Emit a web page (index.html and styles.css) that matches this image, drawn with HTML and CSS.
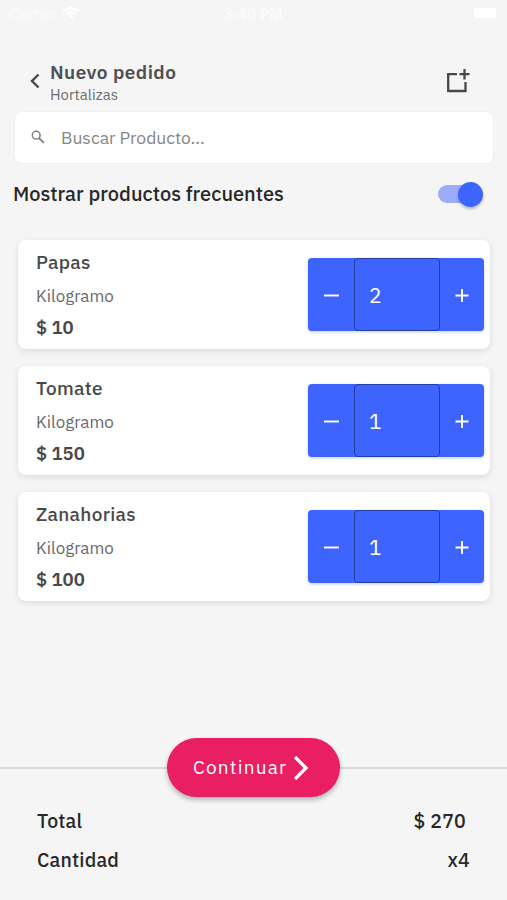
FILE: index.html
```html
<!DOCTYPE html>
<html lang="es">
<head>
<meta charset="utf-8">
<title>Nuevo pedido</title>
<link rel="stylesheet" href="styles.css">
</head>
<body>
<div class="status">
  <div class="carrier"><span>Carrier</span>
    <svg width="18" height="14" viewBox="0 0 18 14"><path d="M0 4.500a13 13 0 0 1 18 0l-2 2a10 10 0 0 0-14 0zM3.200 7.600a8.500 8.500 0 0 1 11.600 0l-2 2a5.500 5.500 0 0 0-7.600 0zM6.300 10.700a4 4 0 0 1 5.400 0L9 13.500z" fill="#fff"/></svg>
  </div>
  <span class="clock">3:40 PM</span>
  <span class="battery"></span>
</div>
<header class="header">
  <svg class="back" width="12" height="16" viewBox="0 0 12 16"><path d="M10.500 1.500 4 8l6.500 6.500" fill="none" stroke="#48484b" stroke-width="2.400"/></svg>
  <div class="heading"><h1>Nuevo pedido</h1><p>Hortalizas</p></div>
  <svg class="new" width="26" height="26" viewBox="0 0 26 26"><path d="M12 6.200H3.200V23H20.500V14M19.500 1v10.500M14.500 6.200h10" fill="none" stroke="#48484b" stroke-width="2.300"/></svg>
</header>
<div class="search">
  <svg width="14" height="14" viewBox="0 0 14 14"><circle cx="5.200" cy="5.200" r="3.900" fill="none" stroke="#808080" stroke-width="1.500"/><path d="m8 8 4.800 4.800" stroke="#808080" stroke-width="1.800"/></svg>
  <span>Buscar Producto...</span>
</div>
<div class="frequent"><span>Mostrar productos frecuentes</span><div class="switch"><i></i></div></div>
<main class="products">
  <article class="card">
    <div class="info"><h2>Papas</h2><p>Kilogramo</p><strong>$ 10</strong></div>
    <div class="stepper"><svg viewBox="0 0 46 73"><path d="M16 37.500h15"/></svg><b>2</b><svg viewBox="0 0 44 73"><path d="M15.500 37.500h13M22 31v13"/></svg></div>
  </article>
  <article class="card">
    <div class="info"><h2>Tomate</h2><p>Kilogramo</p><strong>$ 150</strong></div>
    <div class="stepper"><svg viewBox="0 0 46 73"><path d="M16 37.500h15"/></svg><b>1</b><svg viewBox="0 0 44 73"><path d="M15.500 37.500h13M22 31v13"/></svg></div>
  </article>
  <article class="card">
    <div class="info"><h2>Zanahorias</h2><p>Kilogramo</p><strong>$ 100</strong></div>
    <div class="stepper"><svg viewBox="0 0 46 73"><path d="M16 37.500h15"/></svg><b>1</b><svg viewBox="0 0 44 73"><path d="M15.500 37.500h13M22 31v13"/></svg></div>
  </article>
</main>
<footer class="footer">
  <div class="action"><div class="continue"><span>Continuar</span><svg width="16" height="26" viewBox="0 0 16 26"><path d="M2 2l11 11L2 24" fill="none" stroke="#fff" stroke-width="3.200"/></svg></div></div>
  <div class="row"><span>Total</span><span>$ 270</span></div>
  <div class="row"><span>Cantidad</span><span>x4</span></div>
</footer>
</body>
</html>
```
FILE: styles.css
```css
* { box-sizing: border-box; }
body {
  margin: 0; width: 507px; height: 900px; overflow: hidden;
  display: flex; flex-direction: column;
  background: #f5f5f5; color: #28282a;
  font-family: "IBM Plex Sans", "Noto Sans CJK SC", sans-serif;
}
h1, h2, p { margin: 0; }
svg { display: block; flex: none; }
.status { height: 60px; padding: 5px 11px 0 10px; display: grid; grid-template-columns: 1fr auto 1fr; align-items: start; color: #fbfbfb; font: 14px/18px Inter, sans-serif; }
.carrier { display: flex; gap: 6px; }
.carrier svg { margin-top: 1px; }
.clock { font-weight: 600; letter-spacing: .3px; }
.battery { justify-self: end; margin-top: 3px; width: 22px; height: 10px; border-radius: 2px; background: #fff; }
.header { height: 51px; padding: 0 36px 0 28px; display: flex; }
.back { margin-top: 13px; }
.heading { flex: 1; padding-left: 10px; color: #505053; }
.heading h1 { font-size: 19px; line-height: 24px; font-weight: 600; letter-spacing: .45px; }
.heading p { margin-top: 1px; font-size: 15px; line-height: 20px; color: #6d6d70; }
.new { margin: 8px 0 0; }
.search { height: 53px; margin: 0 13px 0 14px; padding: 0 16px; border: 1px solid #f0f0f0; border-radius: 8px; background: #fff; display: flex; align-items: center; gap: 16px; color: #858585; font-size: 17.500px; }
.search svg { margin-top: -1px; }
.frequent { height: 76px; padding: 16px 24px 0 13px; display: flex; justify-content: space-between; font-size: 20px; line-height: 28px; font-weight: 500; }
.switch { position: relative; width: 45px; height: 28px; display: flex; justify-content: flex-end; align-items: center; }
.switch::before { content: ""; position: absolute; left: 0; top: 5px; width: 38px; height: 18px; border-radius: 9px; background: #9badfa; }
.switch i { position: relative; width: 25px; height: 25px; border-radius: 50%; background: #3e64ff; box-shadow: 0 2px 3px #0004; }
.products { padding: 0 17px 0 18px; display: flex; flex-direction: column; gap: 17px; }
.card { height: 109px; padding: 8px 6px 0 18px; display: flex; justify-content: space-between; border-radius: 8px; background: #fff; box-shadow: 0 2px 6px #0000001c; color: #48484b; }
.info h2 { font-size: 19px; line-height: 28px; font-weight: 500; letter-spacing: .3px; }
.info p { margin-top: 6px; font-size: 17px; line-height: 28px; color: #69696c; }
.info strong { display: block; margin-top: 3px; font-size: 18.500px; line-height: 28px; font-weight: 600; }
.stepper { margin-top: 10px; width: 176px; height: 73px; display: grid; grid-template-columns: 46px 86px 44px; border-radius: 4px; background: #3e64ff; box-shadow: 0 1px 3px #3e64ff55; }
.stepper svg { width: 100%; height: 73px; fill: none; stroke: #fff; stroke-width: 1.900; }
.stepper b { height: 73px; padding-left: 14px; border: 1.500px solid #243c9b; border-radius: 4px; color: #fff; font-size: 21px; font-weight: 400; line-height: 72px; }
.footer { margin-top: auto; height: 162px; }
.action { height: 59px; display: flex; justify-content: center; background: linear-gradient(#d9d9d9, #d9d9d9) 0 29px / 100% 2px no-repeat; }
.continue { width: 173px; height: 59px; padding-left: 26px; border-radius: 30px; background: #e91e63; display: flex; align-items: center; gap: 6px; color: #fff; font-size: 19px; letter-spacing: 1.200px; box-shadow: 0 3px 5px #0004; }
.continue span { margin-top: -2px; }
.row { height: 39px; padding: 0 37px; display: flex; justify-content: space-between; line-height: 39px; font-size: 19.500px; font-weight: 500; letter-spacing: .2px; }
.row:nth-child(2) { margin-top: 4px; padding-right: 41px; }
```
